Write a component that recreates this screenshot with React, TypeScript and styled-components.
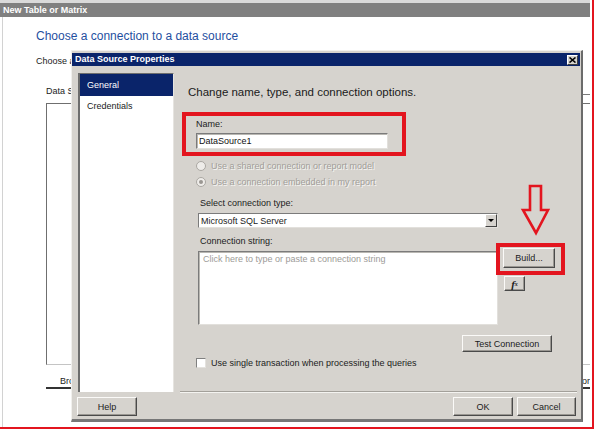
import React from 'react';
import styled, { createGlobalStyle } from 'styled-components';

const GlobalStyle = createGlobalStyle`
  html, body {
    margin: 0;
    padding: 0;
    background: #ffffff;
  }
  body {
    font-family: "Liberation Sans", Arial, sans-serif;
    font-size: 9px;
    color: #1b1b1b;
  }
  * {
    box-sizing: border-box;
  }
`;

const RED = '#e3151f';
const FACE = '#d6d3ce';
const NAVY = '#0a246a';

const Screen = styled.div`
  position: relative;
  width: 594px;
  height: 429px;
  border-right: 2px solid ${RED};
  border-bottom: 2px solid ${RED};
  overflow: hidden;
  background: #fff;
`;

/* ---------- window behind the dialog ---------- */

const BgWindow = styled.div`
  width: 590px;
  height: 427px;
  overflow: hidden;
  display: flex;
  flex-direction: column;
`;

const BgTitle = styled.div`
  height: 17px;
  border-top: 3px solid #dadada;
  background: #808080;
  color: #fff;
  font-weight: bold;
  line-height: 14px;
  padding-left: 3px;
  white-space: nowrap;
`;

const BgBody = styled.div`
  flex: 1;
  margin-left: 2px;
  border-left: 1px solid #d2d2d2;
  padding-left: 33px;
`;

const Instruction = styled.div`
  margin-top: 12px;
  font-size: 12px;
  line-height: 15px;
  color: #1f4f9f;
  white-space: nowrap;
`;

const Prompt = styled.div`
  margin-top: 11px;
  line-height: 12px;
  white-space: nowrap;
`;

const DataPanel = styled.div`
  margin-left: 10px;
  width: 544px;
`;

const LabelRow = styled.div`
  margin-top: 18px;
  display: flex;
  justify-content: space-between;
  align-items: flex-start;
`;

const PanelLabel = styled.div`
  line-height: 12px;
  white-space: nowrap;
`;

const HeaderTick = styled.span`
  margin-top: 9px;
  width: 8px;
  border-top: 1px solid #7a7a7a;
`;

const ListBox = styled.div`
  margin-top: 6px;
  height: 262px;
  border: 1px solid #6f6f6f;
  border-right: none;
  border-bottom-color: #c4c4c4;
  background: #fff;
`;

const TabRow = styled.div`
  margin-top: 10px;
  display: flex;
  justify-content: space-between;
`;

const TabLink = styled.div<{ $pad: number }>`
  line-height: 12px;
  padding: 0 ${(p) => p.$pad}px;
  border-bottom: 2px solid #333;
  white-space: nowrap;
`;

/* ---------- dialog ---------- */

const Dialog = styled.div`
  position: absolute;
  left: 71px;
  top: 50px;
  width: 512px;
  background: ${FACE};
  border-top: 1px solid #f1f0ed;
  border-left: 1px solid #f1f0ed;
  border-right: 2px solid #6b6b6b;
  border-bottom: 3px solid #777;
  padding-top: 2px;
`;

const TitleBar = styled.div`
  height: 13px;
  margin-right: 1px;
  background: ${NAVY};
  display: flex;
  align-items: center;
  justify-content: space-between;
  padding: 0 2px 0 3px;
`;

const TitleText = styled.span`
  color: #fff;
  font-weight: bold;
  line-height: 13px;
`;

const CloseBox = styled.span`
  width: 11px;
  height: 10px;
  background: ${FACE};
  border: 1px solid;
  border-color: #fff #404040 #404040 #fff;
  display: flex;
  align-items: center;
  justify-content: center;
`;

const Main = styled.div`
  display: flex;
  padding: 7px 0 0 6px;
`;

const Nav = styled.div`
  width: 96px;
  height: 319px;
  background: #fff;
  border-left: 2px solid #6d6d6d;
  border-top: 1px solid #6d6d6d;
  border-right: 1px solid #e6e4e0;
`;

const NavItem = styled.div<{ $active?: boolean }>`
  height: ${(p) => (p.$active ? 22 : 20)}px;
  line-height: ${(p) => (p.$active ? 22 : 20)}px;
  padding-left: 7px;
  background: ${(p) => (p.$active ? NAVY : 'transparent')};
  color: ${(p) => (p.$active ? '#fff' : '#1b1b1b')};
`;

const Content = styled.div`
  flex: 1;
  margin-left: 6px;
  margin-right: 4px;
  border-bottom: 1px solid #a3a09a;
  box-shadow: 0 1px 0 #f4f3f0;
  display: flex;
  flex-direction: column;
`;

const Heading = styled.div`
  margin-top: 12px;
  padding-left: 8px;
  font-size: 11.5px;
  line-height: 14px;
  color: #1a1a1a;
  white-space: nowrap;
`;

const NameFrame = styled.div`
  margin-top: 13px;
  margin-left: 2px;
  width: 224px;
  border: 4px solid ${RED};
  padding: 2px 0 3px 10px;
`;

const FieldLabel = styled.div<{ $indent?: number }>`
  line-height: 12px;
  padding-left: ${(p) => p.$indent ?? 0}px;
  white-space: nowrap;
`;

const TextBox = styled.div<{ $width: number; $height: number }>`
  width: ${(p) => p.$width}px;
  height: ${(p) => p.$height}px;
  background: #fff;
  border: 1px solid;
  border-color: #7b7b7b #e2e0dc #e2e0dc #7b7b7b;
  box-shadow: inset 1px 1px 0 #b9b7b2;
  display: flex;
  align-items: flex-start;
  padding: 0 2px;
  white-space: nowrap;
  overflow: hidden;
`;

const BoxText = styled.span<{ $muted?: boolean }>`
  line-height: ${(p) => (p.$muted ? 12 : 14)}px;
  padding-top: ${(p) => (p.$muted ? 1 : 0)}px;
  padding-left: ${(p) => (p.$muted ? 2 : 0)}px;
  color: ${(p) => (p.$muted ? '#9d9b98' : '#111')};
`;

const RadioGroup = styled.div`
  margin-top: 2px;
  padding-left: 16px;
`;

const RadioRow = styled.div`
  height: 16px;
  display: flex;
  align-items: center;
  gap: 5px;
`;

const RadioDot = styled.span<{ $checked?: boolean }>`
  width: 10px;
  height: 10px;
  border-radius: 50%;
  border: 1px solid #aaa7a2;
  background: #eeece9;
  display: flex;
  align-items: center;
  justify-content: center;
  &::after {
    content: '';
    width: 4px;
    height: 4px;
    border-radius: 50%;
    background: ${(p) => (p.$checked ? '#9a9792' : 'transparent')};
  }
`;

const DisabledText = styled.span`
  color: #a19e99;
  text-shadow: 1px 1px 0 #f7f6f4;
  white-space: nowrap;
`;

const Fields = styled.div`
  padding-left: 18px;
  display: flex;
  flex-direction: column;
`;

const Spaced = styled.div<{ $top: number }>`
  margin-top: ${(p) => p.$top}px;
`;

const SelectBox = styled.div`
  width: 300px;
  height: 15px;
  background: #fff;
  border: 1px solid;
  border-color: #7b7b7b #e2e0dc #e2e0dc #7b7b7b;
  display: flex;
  align-items: center;
  justify-content: space-between;
  padding-left: 2px;
`;

const DropButton = styled.span`
  width: 12px;
  height: 13px;
  background: ${FACE};
  border: 1px solid;
  border-color: #fff #404040 #404040 #fff;
  display: flex;
  align-items: center;
  justify-content: center;
  &::after {
    content: '';
    border-left: 3px solid transparent;
    border-right: 3px solid transparent;
    border-top: 3px solid #000;
  }
`;

const StringRow = styled.div`
  margin-top: 4px;
  display: flex;
  align-items: flex-start;
`;

const SideColumn = styled.div`
  margin-top: -8px;
  margin-left: -2px;
  display: flex;
  flex-direction: column;
  align-items: flex-start;
`;

const BuildFrame = styled.div`
  border: 4px solid ${RED};
  padding: 1px 6px 3px 3px;
`;

const Button = styled.div<{ $width: number; $height?: number }>`
  width: ${(p) => p.$width}px;
  height: ${(p) => p.$height ?? 19}px;
  background: ${FACE};
  border: 1px solid;
  border-color: #fbfaf8 #4a4a4a #4a4a4a #fbfaf8;
  box-shadow: inset -1px -1px 0 #9a9792;
  display: flex;
  align-items: center;
  justify-content: center;
  color: #1b1b1b;
  white-space: nowrap;
`;

const FxButton = styled(Button)`
  margin-top: 1px;
  margin-left: 8px;
  font-family: "Liberation Serif", "Times New Roman", serif;
  font-weight: bold;
  font-style: italic;
  font-size: 11px;
  sub {
    font-size: 6px;
    vertical-align: -1px;
  }
`;

const TestRow = styled.div`
  margin-top: 10px;
  margin-right: 25px;
  display: flex;
  justify-content: flex-end;
`;

const CheckRow = styled.div`
  margin-top: 6px;
  padding-left: 16px;
  display: flex;
  align-items: center;
  gap: 5px;
  height: 10px;
`;

const CheckBox = styled.span`
  width: 10px;
  height: 10px;
  background: #fff;
  border: 1px solid;
  border-color: #808080 #e4e2de #e4e2de #808080;
`;

const Footer = styled.div`
  display: flex;
  justify-content: space-between;
  padding: 5px 5px 3px 5px;
`;

const ButtonGroup = styled.div`
  display: flex;
  gap: 4px;
`;

const Arrow = styled.svg`
  position: absolute;
  left: 520px;
  top: 183px;
`;

const App: React.FC = () => (
  <>
    <GlobalStyle />
    <Screen>
      <BgWindow>
        <BgTitle>New Table or Matrix</BgTitle>
        <BgBody>
          <Instruction>Choose a connection to a data source</Instruction>
          <Prompt>Choose a data source for the table:</Prompt>
          <DataPanel>
            <LabelRow>
              <PanelLabel>Data Source connections</PanelLabel>
              <HeaderTick />
            </LabelRow>
            <ListBox />
            <TabRow>
              <TabLink $pad={14}>Browse...</TabLink>
              <TabLink $pad={0}>Error</TabLink>
            </TabRow>
          </DataPanel>
        </BgBody>
      </BgWindow>

      <Dialog>
        <TitleBar>
          <TitleText>Data Source Properties</TitleText>
          <CloseBox>
            <svg width="7" height="6" viewBox="0 0 7 6">
              <path d="M0.5 0.5 L6.5 5.5 M6.5 0.5 L0.5 5.5" stroke="#000" strokeWidth="1.6" />
            </svg>
          </CloseBox>
        </TitleBar>
        <Main>
          <Nav>
            <NavItem $active>General</NavItem>
            <NavItem>Credentials</NavItem>
          </Nav>
          <Content>
            <Heading>Change name, type, and connection options.</Heading>
            <NameFrame>
              <FieldLabel>Name:</FieldLabel>
              <Spaced $top={3}>
                <TextBox $width={192} $height={16}>
                  <BoxText>DataSource1</BoxText>
                </TextBox>
              </Spaced>
            </NameFrame>
            <RadioGroup>
              <RadioRow>
                <RadioDot />
                <DisabledText>Use a shared connection or report model</DisabledText>
              </RadioRow>
              <RadioRow>
                <RadioDot $checked />
                <DisabledText>Use a connection embedded in my report</DisabledText>
              </RadioRow>
            </RadioGroup>
            <Fields>
              <Spaced $top={7}>
                <FieldLabel $indent={2}>Select connection type:</FieldLabel>
              </Spaced>
              <Spaced $top={4}>
                <SelectBox>
                  <span>Microsoft SQL Server</span>
                  <DropButton />
                </SelectBox>
              </Spaced>
              <Spaced $top={7}>
                <FieldLabel $indent={2}>Connection string:</FieldLabel>
              </Spaced>
              <StringRow>
                <TextBox $width={300} $height={74}>
                  <BoxText $muted>Click here to type or paste a connection string</BoxText>
                </TextBox>
                <SideColumn>
                  <BuildFrame>
                    <Button $width={52} $height={20}>Build...</Button>
                  </BuildFrame>
                  <FxButton $width={21} $height={15}>
                    f<sub>x</sub>
                  </FxButton>
                </SideColumn>
              </StringRow>
            </Fields>
            <TestRow>
              <Button $width={90} $height={17}>Test Connection</Button>
            </TestRow>
            <CheckRow>
              <CheckBox />
              <span>Use single transaction when processing the queries</span>
            </CheckRow>
          </Content>
        </Main>
        <Footer>
          <Button $width={60}>Help</Button>
          <ButtonGroup>
            <Button $width={60}>OK</Button>
            <Button $width={59}>Cancel</Button>
          </ButtonGroup>
        </Footer>
      </Dialog>

      <Arrow width="32" height="54" viewBox="0 0 32 54">
        <path
          d="M10 3 L21 3 L21 27 L28 27 L16 50 L3 27 L10 27 Z"
          fill="none"
          stroke={RED}
          strokeWidth="2.6"
          strokeLinejoin="miter"
        />
      </Arrow>
    </Screen>
  </>
);

export default App;
